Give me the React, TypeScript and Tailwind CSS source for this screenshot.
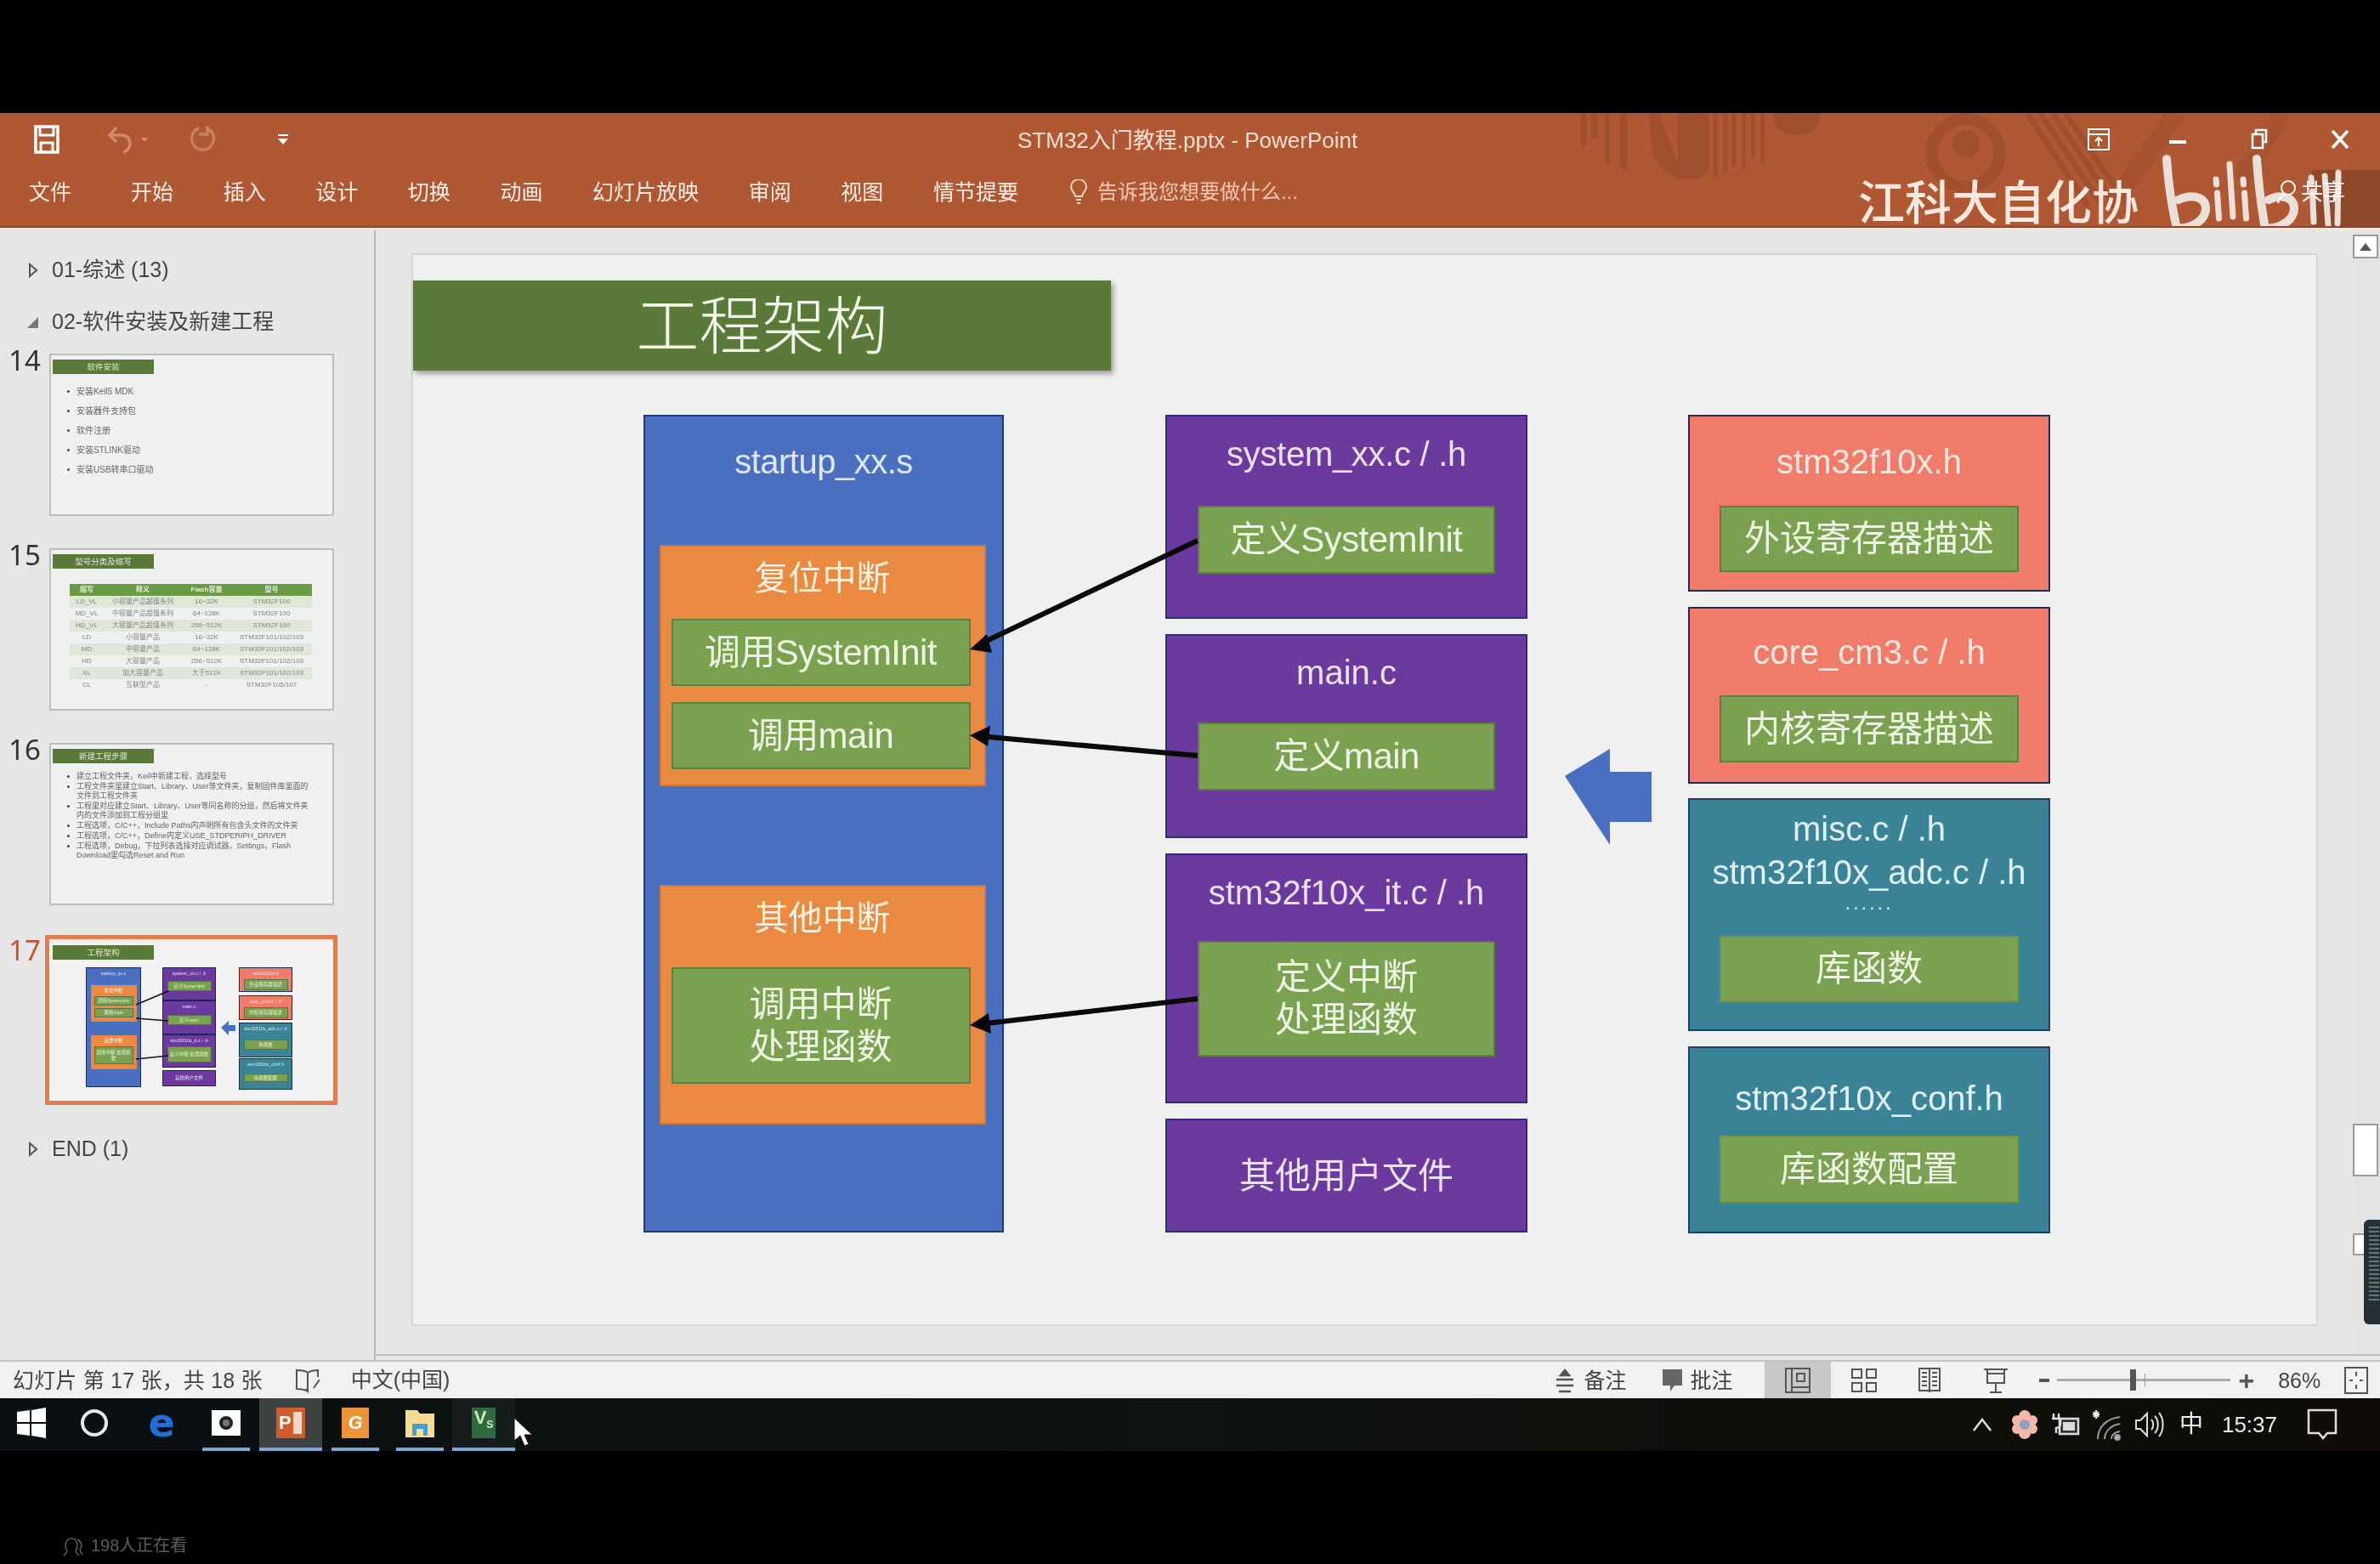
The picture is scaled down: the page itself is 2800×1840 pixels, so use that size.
import { FC, ReactNode } from 'react';

const tabs = ['开始', '插入', '设计', '切换', '动画', '幻灯片放映', '审阅', '视图', '情节提要'];

const QuickBar: FC = () => (
  <div className="flex h-[62px] items-center pl-[38px]">
    <svg width="34" height="36" viewBox="0 0 34 36" fill="none" stroke="#fff" strokeWidth="3.5">
      <path d="M4 3h26v30H4z" />
      <path d="M9 3v10h16V3M10 33V22h14v11" strokeWidth="3" />
    </svg>
    <svg className="ml-[53px]" width="36" height="34" viewBox="0 0 36 34" fill="none" stroke="#d08a6c" strokeWidth="3.5">
      <path d="M12 3 4 12l8 8M5 12h13c8 0 10 6 10 10 0 5-4 9-8 10" />
    </svg>
    <span className="ml-[5px] h-0 w-0 border-x-[4px] border-t-[5px] border-x-transparent border-t-[#d08a6c]" />
    <svg className="ml-[49px]" width="32" height="36" viewBox="0 0 32 36" fill="none" stroke="#c97f60" strokeWidth="3.5">
      <path d="M20 5a13 13 0 1 1-9 0M21 2v10H11" />
    </svg>
    <div className="ml-[72px] flex flex-col items-center gap-[3px]">
      <span className="h-[2px] w-[12px] bg-white" />
      <span className="h-0 w-0 border-x-[6px] border-t-[7px] border-x-transparent border-t-white" />
    </div>
  </div>
);

const RibbonArt: FC = () => (
  <svg className="absolute left-[1840px] top-0" width="960" height="135" viewBox="0 0 960 135" fill="#a0502e">
    <path d="M20 0h6v40h-6zM32 0h8v30h-8zM48 0h6v60h-6zM66 0h8v66h-8zM100 0h12l22 60V0h36v66c0 8 -10 12 -22 12-20 0-36-10-44-30zM176 0h5v76h-5zM187 0h5v70h-5zM198 0h5v62h-5zM209 0h5v66h-5zM220 0h5v54h-5zM231 0h5v60h-5zM246 0h56c0 16-10 26-28 26s-28-10-28-26z" />
    <path fill="none" stroke="#a0502e" strokeWidth="14" d="M473 87a40 40 0 1 0-1 0" />
    <circle cx="473" cy="36" r="16" />
    <path fill="none" stroke="#a0502e" strokeWidth="7" d="M545 0l72 110M560 0l74 110M575 0l74 110M590 0l74 110" />
    <path fill="none" stroke="#a7532f" strokeWidth="22" d="M720 0c-20 30-40 60-70 100M845 0l-50 80" />
    <path d="M880 67h80v68h-80z" fill="#8f482a" />
  </svg>
);

const BiliLogo: FC = () => (
  <svg className="absolute left-[2535px] top-[48px]" width="230" height="95" viewBox="0 0 230 95" fill="none" stroke="#eadfd9" strokeWidth="7" strokeLinecap="round" strokeLinejoin="round">
    <path d="M14 6c2 30 7 60 12 82 18 0 34-10 34-24 0-12-14-18-32-10" strokeWidth="10" />
    <path d="M72 30l.5 6M73.5 46l2 30M88 12l4 62M104 30l.5 6M105.5 46l2 30" />
    <path d="M120 6c2 30 6 60 10 82 18 0 34-10 34-24 0-12-14-18-30-10" strokeWidth="10" />
    <path d="M184 28l.5 6M185.5 44l1.5 36M200 26l4 58M216 22l-1 60" />
  </svg>
);

const WindowControls: FC = () => (
  <div className="absolute left-[2455px] top-[16px] flex h-[30px] items-center">
    <svg width="28" height="28" viewBox="0 0 28 28" fill="none" stroke="#fff" strokeWidth="2">
      <path d="M2 2h24v24H2zM2 8h24M14 22v-9M10 16l4-4 4 4" />
    </svg>
    <span className="ml-[69px] mt-[6px] h-[4px] w-[20px] bg-white" />
    <svg className="ml-[76px]" width="20" height="28" viewBox="0 0 20 28" fill="none" stroke="#fff" strokeWidth="2.5">
      <path d="M6 8V3h12v14h-4M2 8h12v16H2z" />
    </svg>
    <svg className="ml-[74px]" width="22" height="24" viewBox="0 0 22 24" fill="none" stroke="#fff" strokeWidth="3.5">
      <path d="M2 2l18 20M20 2 2 22" />
    </svg>
  </div>
);

const Ribbon: FC = () => (
  <div className="relative h-[135px] overflow-hidden border-b-2 border-[#8f4527] bg-[#b05733] text-[#fbeee6]">
    <RibbonArt />
    <QuickBar />
    <div className="absolute left-[1197px] top-[14px] text-[26px] leading-[36px] text-[#f6dfd2]">STM32入门教程.pptx - PowerPoint</div>
    <WindowControls />
    <div className="mt-[12px] flex h-[36px] items-center pl-[34px] pt-[2px] text-[25px] leading-[36px]">
      <span>文件</span>
      <div className="ml-[70px] flex gap-[58.6px]">
        {tabs.map((t) => (
          <span key={t}>{t}</span>
        ))}
      </div>
      <svg className="ml-[60px]" width="22" height="30" viewBox="0 0 22 30" fill="none" stroke="#f3d8c8" strokeWidth="2">
        <path d="M7 20c0-4-5-6-5-11a9 9 0 0 1 18 0c0 5-5 7-5 11zM8 24h6M9 28h4" />
      </svg>
      <span className="ml-[11px] text-[24px] text-[#eec9b5]">告诉我您想要做什么...</span>
    </div>
    <div className="absolute left-[2186px] top-[78px] text-[55px] font-medium leading-[56px] text-[#fbe9df]">江科大自化协</div>
    <BiliLogo />
    <div className="absolute left-[2677px] top-[76px] flex items-center text-[26px] leading-[34px] text-white">
      <svg width="30" height="30" viewBox="0 0 30 30" fill="none" stroke="#fff" strokeWidth="2">
        <circle cx="15" cy="10" r="8" />
        <path d="M3 28c1-7 6-10 12-10" />
      </svg>
      <span>共享</span>
    </div>
  </div>
);

const MiniTitle: FC<{ text: string }> = ({ text }) => (
  <div className="ml-[2px] mt-[5px] flex h-[17px] w-[119px] items-center justify-center bg-[#5a7a3a] text-[9.5px] leading-none text-[#dfe8d0]">{text}</div>
);

const Slide14: FC = () => (
  <>
    <MiniTitle text="软件安装" />
    <ul className="ml-[19px] mt-[15px] flex flex-col gap-[12px] text-[10px] leading-[11px] text-[#666]">
      {['安装Keil5 MDK', '安装器件支持包', '软件注册', '安装STLINK驱动', '安装USB转串口驱动'].map((t) => (
        <li key={t} className="flex items-center gap-[8px]">
          <span className="h-[3px] w-[3px] rounded-full bg-[#444]" />
          {t}
        </li>
      ))}
    </ul>
  </>
);

const tableRows = [
  ['LD_VL', '小容量产品超值系列', '16~32K', 'STM32F100'],
  ['MD_VL', '中容量产品超值系列', '64~128K', 'STM32F100'],
  ['HD_VL', '大容量产品超值系列', '256~512K', 'STM32F100'],
  ['LD', '小容量产品', '16~32K', 'STM32F101/102/103'],
  ['MD', '中容量产品', '64~128K', 'STM32F101/102/103'],
  ['HD', '大容量产品', '256~512K', 'STM32F101/102/103'],
  ['XL', '加大容量产品', '大于512K', 'STM32F101/102/103'],
  ['CL', '互联型产品', '-', 'STM32F105/107'],
];

const Slide15: FC = () => (
  <>
    <MiniTitle text="型号分类及缩写" />
    <div className="ml-[22px] mt-[18px] w-[285px] text-center text-[8px] leading-[14px] text-[#808080]">
      <div className="grid grid-cols-[40px_92px_58px_95px] bg-[#6b9a47] font-bold text-[#e5efdc]">
        <span>缩写</span>
        <span>释义</span>
        <span>Flash容量</span>
        <span>型号</span>
      </div>
      {tableRows.map((r, i) => (
        <div key={r[0]} className={i % 2 === 0 ? 'grid grid-cols-[40px_92px_58px_95px] bg-[#dfe8d8]' : 'grid grid-cols-[40px_92px_58px_95px]'}>
          {r.map((c, j) => (
            <span key={j} className="whitespace-nowrap">{c}</span>
          ))}
        </div>
      ))}
    </div>
  </>
);

const Slide16: FC = () => (
  <>
    <MiniTitle text="新建工程步骤" />
    <ul className="ml-[19px] mr-[20px] mt-[10px] text-[9px] leading-[11px] text-[#626262]">
      {[
        '建立工程文件夹，Keil中新建工程，选择型号',
        '工程文件夹里建立Start、Library、User等文件夹，复制固件库里面的文件到工程文件夹',
        '工程里对应建立Start、Library、User等同名称的分组，然后将文件夹内的文件添加到工程分组里',
        '工程选项，C/C++，Include Paths内声明所有包含头文件的文件夹',
        '工程选项，C/C++，Define内定义USE_STDPERIPH_DRIVER',
        '工程选项，Debug，下拉列表选择对应调试器，Settings，Flash Download里勾选Reset and Run',
      ].map((t) => (
        <li key={t} className="flex gap-[8px] pb-[1px]">
          <span className="mt-[4px] h-[3px] w-[3px] shrink-0 rounded-full bg-[#444]" />
          <span>{t}</span>
        </li>
      ))}
    </ul>
  </>
);

const MiniGreen: FC<{ className: string; text: string }> = ({ className, text }) => (
  <div className={`flex items-center justify-center border border-[#56704a] bg-[#7aa14f] text-center text-[5.5px] leading-[7px] text-[#e8f2dc] ${className}`}>{text}</div>
);

const MiniBox: FC<{ className: string; title: string; green: string; greenCls: string }> = ({ className, title, green, greenCls }) => (
  <div className={`flex flex-col items-center border border-[#16275a] text-[5.5px] leading-[7px] text-[#e8e8f2] ${className}`}>
    <span className="mt-[3px] whitespace-nowrap">{title}</span>
    <MiniGreen className={greenCls} text={green} />
  </div>
);

const Slide17: FC = () => (
  <div className="relative">
    <div className="ml-[4px] mt-[7px] flex h-[17px] w-[119px] items-center justify-center bg-[#5a7a3a] text-[9.5px] leading-none text-[#dfe8d0]">工程架构</div>
    <div className="ml-[43px] mt-[9px] flex">
      <div className="flex h-[141px] w-[65px] flex-col items-center border border-[#16275a] bg-[#4a6fc1] text-[5.5px] leading-[7px] text-[#dfe6f8]">
        <span className="mt-[3px]">startup_xx.s</span>
        <div className="mt-[10px] flex h-[43px] w-[54px] flex-col items-center bg-[#ea8a40] text-[#fff2e4]">
          <span className="mt-[3px]">复位中断</span>
          <MiniGreen className="mt-[3px] h-[11px] w-[46px]" text="调用SystemInit" />
          <MiniGreen className="mt-[3px] h-[11px] w-[46px]" text="调用main" />
        </div>
        <div className="mt-[16px] flex h-[40px] w-[54px] flex-col items-center bg-[#ea8a40] text-[#fff2e4]">
          <span className="mt-[3px]">其他中断</span>
          <MiniGreen className="mt-[3px] h-[21px] w-[46px]" text="调用中断 处理函数" />
        </div>
      </div>
      <div className="ml-[25px] flex w-[63px] flex-col">
        <MiniBox className="h-[39px] bg-[#6c3a9e]" title="system_xx.c / .h" green="定义SystemInit" greenCls="mt-[5px] h-[12px] w-[52px]" />
        <MiniBox className="h-[40px] bg-[#6c3a9e]" title="main.c" green="定义main" greenCls="mt-[6px] h-[12px] w-[52px]" />
        <MiniBox className="h-[39px] bg-[#6c3a9e]" title="stm32f10x_it.c / .h" green="定义中断 处理函数" greenCls="mt-[3px] h-[19px] w-[52px]" />
        <div className="mt-[3px] flex h-[19px] items-center justify-center border border-[#16275a] bg-[#6c3a9e] text-[5.5px] text-[#e8e8f2]">其他用户文件</div>
      </div>
      <div className="ml-[27px] flex w-[63px] flex-col">
        <MiniBox className="h-[29px] bg-[#f07b68]" title="stm32f10x.h" green="外设寄存器描述" greenCls="mt-[3px] h-[13px] w-[52px]" />
        <MiniBox className="mt-[4px] h-[29px] bg-[#f07b68]" title="core_cm3.c / .h" green="内核寄存器描述" greenCls="mt-[3px] h-[13px] w-[52px]" />
        <MiniBox className="mt-[3px] h-[41px] bg-[#3b8498]" title="stm32f10x_adc.c / .h" green="库函数" greenCls="mt-[9px] h-[12px] w-[52px]" />
        <MiniBox className="mt-[1px] h-[37px] bg-[#3b8498]" title="stm32f10x_conf.h" green="库函数配置" greenCls="mt-[7px] h-[10px] w-[52px]" />
      </div>
    </div>
    <svg className="absolute left-0 top-0" width="334" height="190" viewBox="0 0 334 190" fill="none" stroke="#111" strokeWidth="1.6">
      <path d="M140 54l-38 16M140 89l-38-3M140 130l-38 4" />
      <path d="M202 97l9-8v5h8v7h-8v5z" fill="#4a6fc1" stroke="none" />
    </svg>
  </div>
);

const Thumb: FC<{ num: number; children: ReactNode; active?: boolean }> = ({ num, children, active }) =>
  active ? (
    <div className="mt-[35px] flex">
      <span className="w-[53px] pl-[10px] font-['Noto_Sans',sans-serif] text-[33px] leading-[36px] text-[#bd5530]">{num}</span>
      <div className="h-[200px] w-[344px] overflow-hidden border-[5px] border-[#e37c50] bg-[#f2f2f2]">{children}</div>
    </div>
  ) : (
    <div className="mt-[38px] flex first:mt-[29px]">
      <span className="w-[58px] pl-[10px] font-['Noto_Sans',sans-serif] text-[33px] leading-[16px] text-[#333]">{num}</span>
      <div className="h-[191px] w-[335px] overflow-hidden border-2 border-[#bcbcbc] bg-[#f0f0f0]">{children}</div>
    </div>
  );

const Section: FC<{ label: string; open?: boolean; className: string }> = ({ label, open, className }) => (
  <div className={`flex h-[40px] items-center text-[25px] text-[#454545] ${className}`}>
    <span className="flex w-[61px] justify-end pr-[16px]">
      {open ? (
        <span className="h-0 w-0 border-b-[13px] border-l-[13px] border-b-[#777] border-l-transparent" />
      ) : (
        <svg width="12" height="18" viewBox="0 0 12 18" fill="none" stroke="#555" strokeWidth="2">
          <path d="M2 2v14l8-7z" />
        </svg>
      )}
    </span>
    {label}
  </div>
);

const Sidebar: FC = () => (
  <div className="w-[442px] shrink-0 border-r-2 border-[#b9b9b9]">
    <Section label="01-综述 (13)" className="mt-[27px]" />
    <Section label="02-软件安装及新建工程" open className="mt-[21px]" />
    <div className="mt-[-12px]">
      <Thumb num={14}><Slide14 /></Thumb>
      <Thumb num={15}><Slide15 /></Thumb>
      <Thumb num={16}><Slide16 /></Thumb>
      <Thumb num={17} active><Slide17 /></Thumb>
    </div>
    <Section label="END (1)" className="mt-[32px]" />
  </div>
);

const Green: FC<{ className: string; children: ReactNode }> = ({ className, children }) => (
  <div className={`flex shrink-0 items-center justify-center border-2 border-[#5f7d44] bg-[#7aa14f] text-center text-[42px] leading-[50px] text-[#eef5e4] ${className}`}>{children}</div>
);

const Title: FC<{ className: string; children: ReactNode }> = ({ className, children }) => (
  <div className={`flex h-[48px] items-center justify-center whitespace-nowrap text-[40px] leading-[48px] ${className}`}>{children}</div>
);

const LeftColumn: FC = () => (
  <div className="flex h-[962px] w-[424px] flex-col items-center border-2 border-[#1f3c7a] bg-[#4a6fc1] text-[#dde7f8]">
    <Title className="mt-[29px] tracking-[-0.5px]">startup_xx.s</Title>
    <div className="mr-[3px] mt-[74px] flex h-[284px] w-[384px] flex-col items-center border-2 border-[#c97a3b] bg-[#ea8a40] text-[#fff1e2]">
      <Title className="mt-[13px]">复位中断</Title>
      <Green className="mr-[4px] mt-[24px] h-[79px] w-[352px] tracking-[-0.6px]">调用SystemInit</Green>
      <Green className="mr-[4px] mt-[19px] h-[79px] w-[352px] tracking-[-0.6px]">调用main</Green>
    </div>
    <div className="mr-[3px] mt-[116px] flex h-[282px] w-[384px] flex-col items-center border-2 border-[#c97a3b] bg-[#ea8a40] text-[#fff1e2]">
      <Title className="mt-[13px]">其他中断</Title>
      <Green className="mr-[4px] mt-[34px] h-[137px] w-[352px]">调用中断<br />处理函数</Green>
    </div>
  </div>
);

const MiddleColumn: FC = () => (
  <div className="ml-[190px] flex w-[426px] flex-col text-[#e9e2f5]">
    <div className="flex h-[240px] flex-col items-center border-2 border-[#2e2a78] bg-[#6c3a9e]">
      <Title className="mt-[20px] tracking-[-0.3px]">system_xx.c / .h</Title>
      <Green className="mt-[37px] h-[80px] w-[350px] tracking-[-0.6px]">定义SystemInit</Green>
    </div>
    <div className="mt-[18px] flex h-[240px] flex-col items-center border-2 border-[#2e2a78] bg-[#6c3a9e]">
      <Title className="mt-[19px]">main.c</Title>
      <Green className="mt-[35px] h-[80px] w-[350px] tracking-[-0.6px]">定义main</Green>
    </div>
    <div className="mt-[18px] flex h-[294px] flex-col items-center border-2 border-[#2e2a78] bg-[#6c3a9e]">
      <Title className="mt-[20px]">stm32f10x_it.c / .h</Title>
      <Green className="mt-[33px] h-[136px] w-[350px]">定义中断<br />处理函数</Green>
    </div>
    <div className="mt-[18px] flex h-[134px] items-center justify-center border-2 border-[#2e2a78] bg-[#6c3a9e] text-[42px]">其他用户文件</div>
  </div>
);

const RightColumn: FC = () => (
  <div className="ml-[189px] flex w-[426px] flex-col">
    <div className="flex h-[208px] flex-col items-center border-2 border-[#1f2a5a] bg-[#f07b68] text-[#fde8e2]">
      <Title className="mt-[29px]">stm32f10x.h</Title>
      <Green className="mt-[28px] h-[78px] w-[352px]">外设寄存器描述</Green>
    </div>
    <div className="mt-[18px] flex h-[208px] flex-col items-center border-2 border-[#1f2a5a] bg-[#f07b68] text-[#fde8e2]">
      <Title className="mt-[27px]">core_cm3.c / .h</Title>
      <Green className="mt-[27px] h-[79px] w-[352px]">内核寄存器描述</Green>
    </div>
    <div className="mt-[17px] flex h-[274px] flex-col items-center border-2 border-[#1f3f6a] bg-[#3b8498] text-[#dff1f5]">
      <Title className="mt-[10px]">misc.c / .h</Title>
      <Title className="mt-[3px]">stm32f10x_adc.c / .h</Title>
      <div className="h-[24px] text-[24px] leading-[24px] tracking-[2.8px]">......</div>
      <Green className="mt-[27px] h-[78px] w-[352px] border-[#6f9650]">库函数</Green>
    </div>
    <div className="mt-[18px] flex h-[220px] flex-col items-center border-2 border-[#1f3f6a] bg-[#3b8498] text-[#dff1f5]">
      <Title className="mt-[35px]">stm32f10x_conf.h</Title>
      <Green className="mt-[20px] h-[79px] w-[352px] border-[#6f9650]">库函数配置</Green>
    </div>
  </div>
);

const Connectors: FC = () => (
  <svg className="absolute left-0 top-0" width="1660" height="962" viewBox="0 0 1660 962" fill="none">
    <g stroke="#0a0a0a" strokeWidth="6">
      <path d="M652 148 395 270" />
      <path d="M652 401 395 378" />
      <path d="M652 687 395 717" />
    </g>
    <g fill="#0a0a0a">
      <path d="M384 276 404 258 410 280z" />
      <path d="M384 377 408 366 405 390z" />
      <path d="M384 718 406 704 409 728z" />
    </g>
    <path d="M1084 425 1137 393v27h49v59h-49v27z" fill="#4a6fc1" />
  </svg>
);

const SlideCanvas: FC = () => (
  <div className="h-[1262px] w-[2243px] border-2 border-[#d6d6d6] bg-[#f0f0f0]">
    <div className="mt-[30px] flex h-[106px] w-[821px] items-center justify-center bg-[#5a7a3a] pt-[4px] text-[74px] font-light leading-[80px] text-[#f4f8ea] shadow-[3px_4px_6px_rgba(0,0,0,0.35)]">工程架构</div>
    <div className="relative ml-[271px] mt-[52px] flex">
      <LeftColumn />
      <MiddleColumn />
      <RightColumn />
      <Connectors />
    </div>
  </div>
);

const ScrollRail: FC = () => (
  <div className="relative w-[33px] shrink-0 bg-[#e3e3e3]">
    <div className="ml-[1px] mt-[5px] flex h-[28px] w-[30px] items-center justify-center border-2 border-[#9a9a9a] bg-white">
      <span className="h-0 w-0 border-x-[7px] border-b-[9px] border-x-transparent border-b-[#555]" />
    </div>
    <div className="ml-[1px] mt-[1018px] h-[62px] w-[30px] border-2 border-[#9a9a9a] bg-white" />
    <div className="ml-[1px] mt-[67px] h-[26px] w-[30px] border-2 border-[#9a9a9a] bg-white" />
    <div className="absolute left-[14px] top-[1164px] flex h-[123px] w-[20px] flex-col gap-[3px] rounded-l-[6px] bg-[#263038] pl-[6px] pt-[8px]">
      {[0, 1, 2, 3, 4, 5, 6, 7, 8, 9, 10, 11, 12, 13, 14, 15, 16, 17].map((i) => (
        <span key={i} className="h-[2px] w-[12px] bg-[#5f7a70]" />
      ))}
    </div>
  </div>
);

const StatusBar: FC = () => (
  <div className="flex h-[45px] items-center border-t-2 border-[#c4c4c4] bg-[#f1f1f1] pl-[15px] text-[25px] leading-[32px] text-[#444]">
    <span className="tracking-[0.2px]">幻灯片 第 17 张，共 18 张</span>
    <svg className="ml-[38px]" width="30" height="30" viewBox="0 0 30 30" fill="none" stroke="#555" strokeWidth="2">
      <path d="M2 3c5 0 10 0 13 3v22c-3-2-8-3-13-3zM15 6c3-2 6-3 12-3v8M15 28l-2-3M22 24l7-10" />
    </svg>
    <span className="ml-[36px] mb-[2px]">中文(中国)</span>
    <div className="ml-[1302px] flex items-center">
      <svg width="20" height="30" viewBox="0 0 20 30" fill="none" stroke="#555" strokeWidth="2.5">
        <path d="M5 9l5-6 5 6z" fill="#555" />
        <path d="M0 14h20M0 21h20M3 28h14" />
      </svg>
      <span className="ml-[12px]">备注</span>
      <svg className="ml-[42px]" width="25" height="30" viewBox="0 0 25 30" fill="#666">
        <path d="M1 2h23v19H15l-5 7v-7H1z" />
      </svg>
      <span className="ml-[8px]">批注</span>
      <div className="ml-[38px] flex h-[43px] w-[78px] items-center justify-center bg-[#c8c8c8]">
        <svg width="30" height="30" viewBox="0 0 30 30" fill="none" stroke="#555" strokeWidth="2">
          <path d="M1 1h28v28H1zM8 1v28M8 23h21M14 7h9v9h-9z" />
        </svg>
      </div>
      <svg className="ml-[24px]" width="30" height="28" viewBox="0 0 30 28" fill="none" stroke="#555" strokeWidth="2">
        <path d="M1 1h11v10H1zM18 1h11v10H18zM1 17h11v10H1zM18 17h11v10H18z" />
      </svg>
      <svg className="ml-[49px]" width="26" height="30" viewBox="0 0 26 30" fill="none" stroke="#555" strokeWidth="2">
        <path d="M1 1h24v26H1zM13 1v28M4 6h6M4 11h6M4 16h6M4 21h6M16 6h6M16 11h6M16 16h6M16 21h6" />
      </svg>
      <svg className="ml-[50px]" width="30" height="30" viewBox="0 0 30 30" fill="none" stroke="#555" strokeWidth="2">
        <path d="M1 2h28M5 2v16h20V2M5 7h20M15 18v10M8 29h14" />
      </svg>
      <span className="ml-[36px] h-[4px] w-[12px] bg-[#555]" />
      <div className="relative ml-[9px] h-[3px] w-[204px] bg-[#aaa]">
        <span className="absolute left-[86px] top-[-11px] h-[25px] w-[7px] bg-[#555]" />
        <span className="absolute left-[103px] top-[-6px] h-[15px] w-[1px] bg-[#999]" />
      </div>
      <span className="ml-[9px] text-[32px] font-bold leading-[24px] text-[#555]">+</span>
      <span className="ml-[28px]">86%</span>
      <svg className="ml-[28px]" width="28" height="32" viewBox="0 0 28 32" fill="none" stroke="#555" strokeWidth="2">
        <path d="M1 1h26v30H1zM14 6v5M14 21v5M6 16h4M18 16h4" />
      </svg>
    </div>
  </div>
);

const TaskSlot: FC<{ className: string; bar?: string; children: ReactNode }> = ({ className, bar, children }) => (
  <div className={`flex h-full shrink-0 flex-col items-center justify-center border-b-[4px] ${bar ?? 'border-transparent'} ${className}`}>{children}</div>
);

const Taskbar: FC = () => (
  <div className="relative flex h-[62px] items-center bg-gradient-to-r from-[#0a0f12] via-[#0f1410] to-[#0e0b08]">
    <TaskSlot className="w-[74px]">
      <svg width="34" height="36" viewBox="0 0 34 36" fill="#fff">
        <path d="M0 5 15 3v14H0zM17 3 34 0v17H17zM0 19h15v14L0 31zM17 19h17v17l-17-3z" />
      </svg>
    </TaskSlot>
    <TaskSlot className="w-[74px]">
      <span className="h-[32px] w-[32px] rounded-full border-[4px] border-[#e8e8e8]" />
    </TaskSlot>
    <TaskSlot className="ml-[4px] w-[76px]">
      <span className="font-['DejaVu_Sans',sans-serif] text-[46px] font-bold leading-[40px] text-[#1f6fd6]">e</span>
    </TaskSlot>
    <TaskSlot className="w-[56px] mx-[10px]" bar="border-[#7ea6d8]">
      <div className="flex h-[30px] w-[34px] items-center justify-center bg-white">
        <span className="h-[16px] w-[16px] rounded-full border-[4px] border-[#222] bg-[#777]" />
      </div>
    </TaskSlot>
    <TaskSlot className="w-[74px] bg-[#3d4242] mr-[1px] ml-[1px]" bar="border-[#7ea6d8]">
      <div className="flex h-[36px] w-[34px] items-center bg-[#cf5a2a] pl-[3px] text-[22px] font-bold leading-none text-white">
        P<span className="ml-[2px] h-[26px] w-[10px] bg-[#f0d7c8]" />
      </div>
    </TaskSlot>
    <TaskSlot className="w-[56px] mx-[10px]" bar="border-[#7ea6d8]">
      <div className="flex h-[36px] w-[32px] items-center justify-center bg-[#ee9333] text-[22px] font-bold italic leading-none text-white">G</div>
    </TaskSlot>
    <TaskSlot className="w-[56px] mx-[10px]" bar="border-[#7ea6d8]">
      <svg width="34" height="34" viewBox="0 0 34 34">
        <path d="M0 2h14l3 4h17v28H0z" fill="#f5dc8e" />
        <path d="M8 18h18v14h-5v-8h-8v8H8z" fill="#4a9bd6" />
      </svg>
    </TaskSlot>
    <TaskSlot className="w-[74px] bg-[#171c1c]" bar="border-[#7ea6d8]">
      <div className="flex h-[36px] w-[28px] items-start justify-center bg-[#2f6b3f] text-[22px] font-bold leading-[24px] text-[#cfe8c8]">V<span className="mt-[14px] text-[12px] leading-none">S</span></div>
    </TaskSlot>
    <svg className="absolute left-[604px] top-[22px]" width="24" height="36" viewBox="0 0 24 36" fill="#fff" stroke="#111" strokeWidth="1">
      <path d="M1 1v27l7-6 5 12 5-2-5-11h9z" />
    </svg>
    <div className="ml-auto flex items-center pr-[50px] text-[26px] leading-[32px] text-[#eee]">
      <svg width="24" height="16" viewBox="0 0 24 16" fill="none" stroke="#ddd" strokeWidth="2.5">
        <path d="M2 15 12 2l10 13" />
      </svg>
      <svg className="ml-[23px]" width="30" height="34" viewBox="0 0 30 34" fill="#f4b7a8">
        <circle cx="15" cy="7" r="7" />
        <circle cx="15" cy="27" r="7" />
        <circle cx="6" cy="12" r="6" />
        <circle cx="24" cy="12" r="6" />
        <circle cx="6" cy="22" r="6" />
        <circle cx="24" cy="22" r="6" />
        <circle cx="15" cy="17" r="6" fill="#8e9fc4" />
      </svg>
      <svg className="ml-[16px]" width="34" height="30" viewBox="0 0 34 30" fill="none" stroke="#ddd" strokeWidth="2.5">
        <path d="M10 8h22v18H10z" fill="#333" />
        <path d="M14 12h14v10H14z" fill="#ddd" stroke="none" />
        <path d="M3 2v6M9 2v6M1 8h10v6c0 3-2 5-5 5v6" />
      </svg>
      <svg className="ml-[15px]" width="36" height="38" viewBox="0 0 36 38" fill="none" stroke="#999" strokeWidth="2">
        <path d="M6 36c0-14 10-24 26-26M14 36c0-9 7-16 18-18M22 36c0-5 3-8 10-9" />
        <circle cx="29" cy="34" r="3" fill="#bbb" />
        <path d="M4 2v10M0 7h8M1 4l6 6M7 4l-6 6" stroke="#eee" />
      </svg>
      <svg className="ml-[14px]" width="34" height="34" viewBox="0 0 34 34" fill="none" stroke="#ddd" strokeWidth="2">
        <path d="M1 12h5l8-8v26l-8-8H1zM19 11c3 3 3 9 0 12M23 7c5 5 5 15 0 20M28 3c6 7 6 21 0 28" />
      </svg>
      <span className="ml-[18px] w-[28px] text-[28px]">中</span>
      <span className="ml-[22px]">15:37</span>
      <svg className="ml-[35px]" width="36" height="38" viewBox="0 0 36 38" fill="none" stroke="#ddd" strokeWidth="2.5">
        <path d="M2 2h32v27H24l-5 6-5-6H2z" />
      </svg>
    </div>
  </div>
);

const App: FC = () => {
  return (
    <div className="flex h-[1840px] w-[2800px] flex-col overflow-hidden bg-black font-['Liberation_Sans','Noto_Sans_CJK_SC',sans-serif] blur-[0.5px]">
      <div className="h-[133px] shrink-0" />
      <Ribbon />
      <div className="flex h-[1332px] shrink-0 border-t-[3px] border-[#f7e6dd] bg-[#e6e6e6]">
        <Sidebar />
        <div className="flex flex-1 flex-col">
          <div className="flex flex-1">
            <div className="flex-1 pl-[42px] pt-[27px]">
              <SlideCanvas />
            </div>
            <ScrollRail />
          </div>
          <div className="mb-[5px] h-[2px] bg-[#bdbdbd]" />
        </div>
      </div>
      <StatusBar />
      <Taskbar />
      <div className="flex flex-1 items-end pb-[8px] pl-[73px] text-[20px] leading-[28px] text-[#5c5c5c]">
        <svg width="26" height="24" viewBox="0 0 26 24" fill="none" stroke="#5c5c5c" strokeWidth="1.5">
          <path d="M2 22c2-2 4-3 4-6-3-3-3-14 5-14s8 11 5 14c0 3 2 4 4 6M18 3c5 2 6 9 3 12 0 2 2 4 3 6" />
        </svg>
        <span className="ml-[8px]">198人正在看</span>
      </div>
    </div>
  );
};

export default App;
